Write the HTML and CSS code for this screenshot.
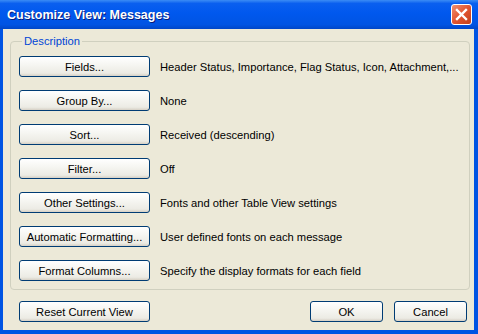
FILE: index.html
```html
<!DOCTYPE html>
<html lang="en">
<head>
    <meta charset="UTF-8">
    <title>Customize View: Messages</title>
    <link rel="stylesheet" href="styles.css">
</head>
<body>
    <div class="window">
        <div class="titlebar">
            <span class="title">Customize View: Messages</span>
            <button class="close" aria-label="Close">
                <svg width="13" height="13" viewBox="0 0 13 13">
                    <path d="M2 2 L11 11 M11 2 L2 11" stroke="#fff" stroke-width="2.4" stroke-linecap="square"/>
                </svg>
            </button>
        </div>
        <div class="content">
            <fieldset class="group">
                <legend>Description</legend>
                <div class="rows">
                    <button class="btn">Fields...</button>
                    <span class="desc">Header Status, Importance, Flag Status, Icon, Attachment,...</span>
                    <button class="btn">Group By...</button>
                    <span class="desc">None</span>
                    <button class="btn">Sort...</button>
                    <span class="desc">Received (descending)</span>
                    <button class="btn">Filter...</button>
                    <span class="desc">Off</span>
                    <button class="btn">Other Settings...</button>
                    <span class="desc">Fonts and other Table View settings</span>
                    <button class="btn">Automatic Formatting...</button>
                    <span class="desc">User defined fonts on each message</span>
                    <button class="btn">Format Columns...</button>
                    <span class="desc">Specify the display formats for each field</span>
                </div>
            </fieldset>
            <div class="footer">
                <button class="btn">Reset Current View</button>
                <div class="spacer"></div>
                <button class="btn small">OK</button>
                <button class="btn small">Cancel</button>
            </div>
        </div>
    </div>
</body>
</html>
```

FILE: styles.css
```css
body {
    margin: 0;
    font-family: Tahoma, "Liberation Sans", Arial, sans-serif;
    font-size: 11.2px;
}

.window {
    width: 478px;
    height: 334px;
    box-sizing: border-box;
    background-color: #0054e3;
    display: flex;
    flex-direction: column;
}

.titlebar {
    height: 29px;
    display: flex;
    align-items: center;
    justify-content: space-between;
    padding: 0 6px 0 7px;
    background: linear-gradient(to bottom, #3b8cf5 0%, #0a5fef 12%, #0058ee 45%, #0054e3 85%, #0046c7 100%);
    color: #fff;
}

.title {
    font-family: "Liberation Sans", Arial, sans-serif;
    font-weight: bold;
    font-size: 12.5px;
    text-shadow: 1px 1px 0 #0a1c7a;
}

.close {
    width: 21px;
    height: 21px;
    padding: 0;
    border: 1px solid #fff;
    border-radius: 3px;
    background: linear-gradient(135deg, #f09070 0%, #e25530 50%, #c2401c 100%);
    display: flex;
    align-items: center;
    justify-content: center;
}

.content {
    flex: 1;
    margin: 0 4px 4px 3px;
    background-color: #ece9d8;
    padding: 6px 4px 0 7px;
    display: flex;
    flex-direction: column;
}

.group {
    margin: 0;
    padding: 9px 8px 8px 8px;
    border: 1px solid #d0d0bf;
    border-radius: 4px;
}

.group legend {
    color: #0046d5;
    padding: 0 2px;
    margin-left: 3px;
}

.rows {
    display: grid;
    grid-template-columns: 131px 1fr;
    column-gap: 10px;
    row-gap: 13px;
    align-items: center;
}

.btn {
    height: 21px;
    width: 131px;
    padding: 0;
    font-family: inherit;
    font-size: 11.2px;
    color: #000;
    border: 1px solid #003c74;
    border-radius: 3px;
    background: linear-gradient(to bottom, #ffffff 0%, #f6f6f2 40%, #ecebe4 85%, #d6d0c5 100%);
}

.btn.small {
    width: 73px;
    margin-left: 11px;
}

.desc {
    color: #000;
    white-space: nowrap;
}

.footer {
    display: flex;
    margin-top: 11px;
    padding: 0 3px 0 9px;
}

.spacer {
    flex: 1;
}
```
